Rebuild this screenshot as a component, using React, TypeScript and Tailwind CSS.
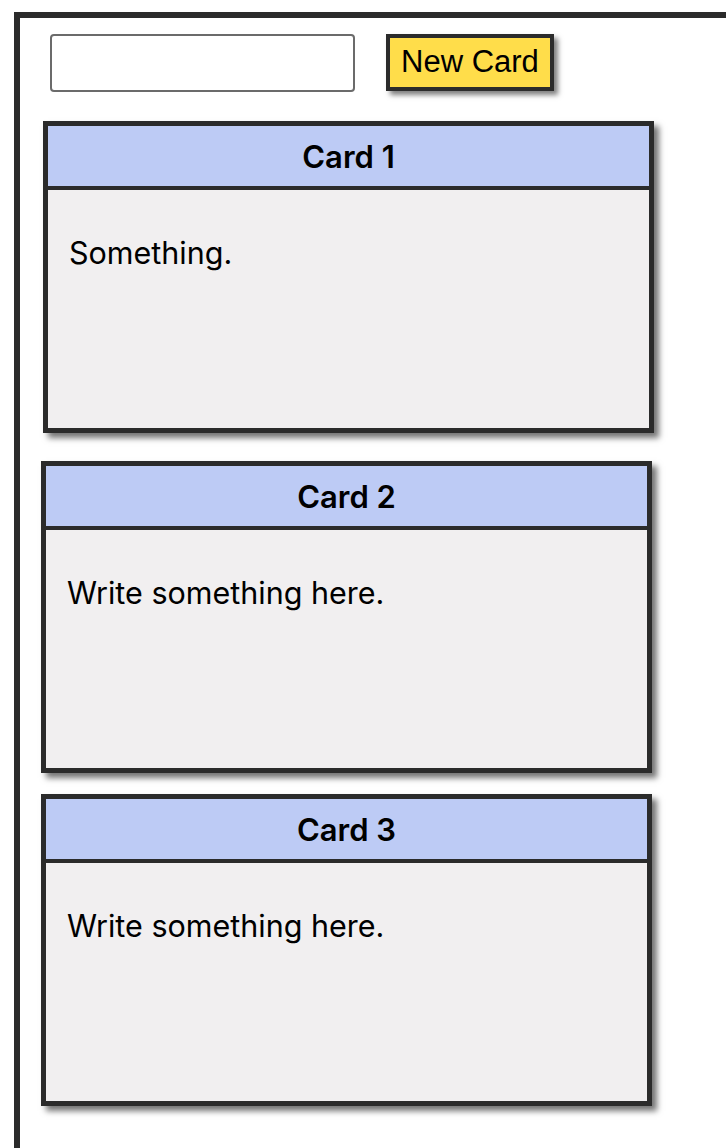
import { useState } from 'react';

type CardData = {
  id: number;
  title: string;
  body: string;
};

const initialCards: CardData[] = [
  { id: 1, title: 'Card 1', body: 'Something.' },
  { id: 2, title: 'Card 2', body: 'Write something here.' },
  { id: 3, title: 'Card 3', body: 'Write something here.' },
];

function Card({ card, className }: { card: CardData; className?: string }) {
  return (
    <div
      className={`w-[611px] h-[312px] flex flex-col border-[5px] border-[#2b2b2b] bg-[#f1eff0] shadow-[5px_5px_6px_rgba(0,0,0,0.55)] ${className ?? ''}`}
    >
      <div className="h-[64px] shrink-0 flex items-center justify-center bg-[#bdcbf5] border-b-4 border-[#2b2b2b]">
        <h2 className="text-[31px] font-semibold leading-none text-black font-['Inter',sans-serif]">
          {card.title}
        </h2>
      </div>
      <div className="flex-1 pl-[21px] pt-[45px]">
        <p className="text-[30.5px] leading-[36px] text-black font-['Inter',sans-serif]">
          {card.body}
        </p>
      </div>
    </div>
  );
}

export default function App() {
  const [cards, setCards] = useState<CardData[]>(initialCards);
  const [name, setName] = useState('');

  const addCard = () => {
    const n = cards.length + 1;
    setCards([...cards, { id: n, title: name || `Card ${n}`, body: 'Write something here.' }]);
    setName('');
  };

  return (
    <div className="w-[726px] h-[1148px] overflow-hidden bg-white">
      <div className="ml-[14px] mt-[12px] w-[760px] h-[1200px] border-t-[6px] border-l-[6px] border-[#2b2b2b] pl-[30px] pt-[16px]">
        <div className="flex items-start">
          <input
            value={name}
            onChange={(e) => setName(e.target.value)}
            className="w-[305px] h-[58px] rounded-[4px] border-2 border-[#6b6b6b] bg-white px-2 text-[24px] outline-none"
          />
          <button
            onClick={addCard}
            className="ml-[31px] h-[57px] px-[11px] pb-[2px] border-4 border-[#2b2b2b] bg-[#ffdd4a] text-[31px] leading-none text-black font-['Liberation_Sans',Arial,sans-serif] shadow-[4px_4px_5px_rgba(0,0,0,0.5)]"
          >
            New Card
          </button>
        </div>
        <div className="flex flex-col">
          {cards.map((card, i) => (
            <Card
              key={card.id}
              card={card}
              className={i === 0 ? 'ml-[-7px] mt-[29px]' : i === 1 ? 'ml-[-9px] mt-[28px]' : 'ml-[-9px] mt-[21px]'}
            />
          ))}
        </div>
      </div>
    </div>
  );
}
